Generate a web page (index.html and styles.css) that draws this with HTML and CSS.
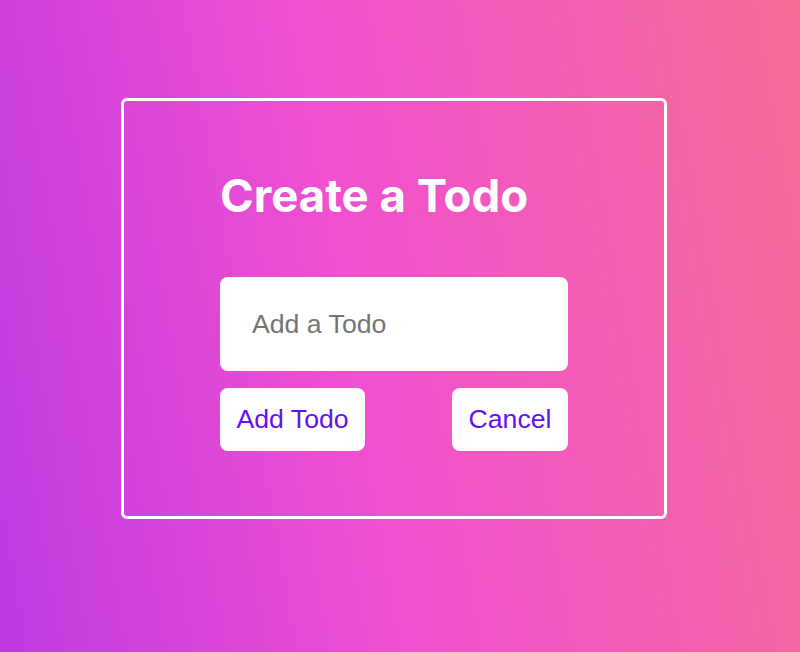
FILE: index.html
```html
<!DOCTYPE html>
<html lang="en">
<head>
<meta charset="utf-8">
<title>Create a Todo</title>
<link rel="stylesheet" href="styles.css">
</head>
<body>
<main class="page">
  <section class="card">
    <h1 class="title">Create a Todo</h1>
    <input class="todo-input" type="text" placeholder="Add a Todo">
    <div class="actions">
      <button class="btn" type="button">Add Todo</button>
      <button class="btn" type="button">Cancel</button>
    </div>
  </section>
</main>
</body>
</html>
```

FILE: styles.css
```css
* { box-sizing: border-box; }
html, body { margin: 0; padding: 0; height: 100%; }
body {
  font-family: "Liberation Sans", Arial, sans-serif;
}
.page {
  width: 800px;
  height: 652px;
  background: linear-gradient(80deg, #bf3ae2 0%, #f050d0 45%, #f46c96 100%);
  padding: 98px 0 0 121px;
}
.card {
  width: 546px;
  height: 421px;
  border: 3px solid #ffffff;
  border-radius: 6px;
  padding: 67px 96px 0;
  display: flex;
  flex-direction: column;
}
.title {
  margin: 0 0 54px;
  font-family: Inter, "Noto Sans", sans-serif;
  font-weight: 700;
  font-size: 45.6px;
  color: #ffffff;
  line-height: 1.21;
}
.todo-input {
  width: 348px;
  height: 94px;
  flex: none;
  border: none;
  border-radius: 8px;
  background: #ffffff;
  padding: 0 32px;
  font-family: "Liberation Sans", Arial, sans-serif;
  font-size: 26.67px;
  color: #333;
  outline: none;
}
.todo-input::placeholder { color: #757575; }
.actions {
  margin-top: 17px;
  display: flex;
  justify-content: space-between;
}
.btn {
  height: 63px;
  border: none;
  border-radius: 8px;
  background: #ffffff;
  padding: 0 16.5px;
  font-family: "Liberation Sans", Arial, sans-serif;
  font-size: 26.67px;
  color: #6610f2;
  cursor: pointer;
}
```
